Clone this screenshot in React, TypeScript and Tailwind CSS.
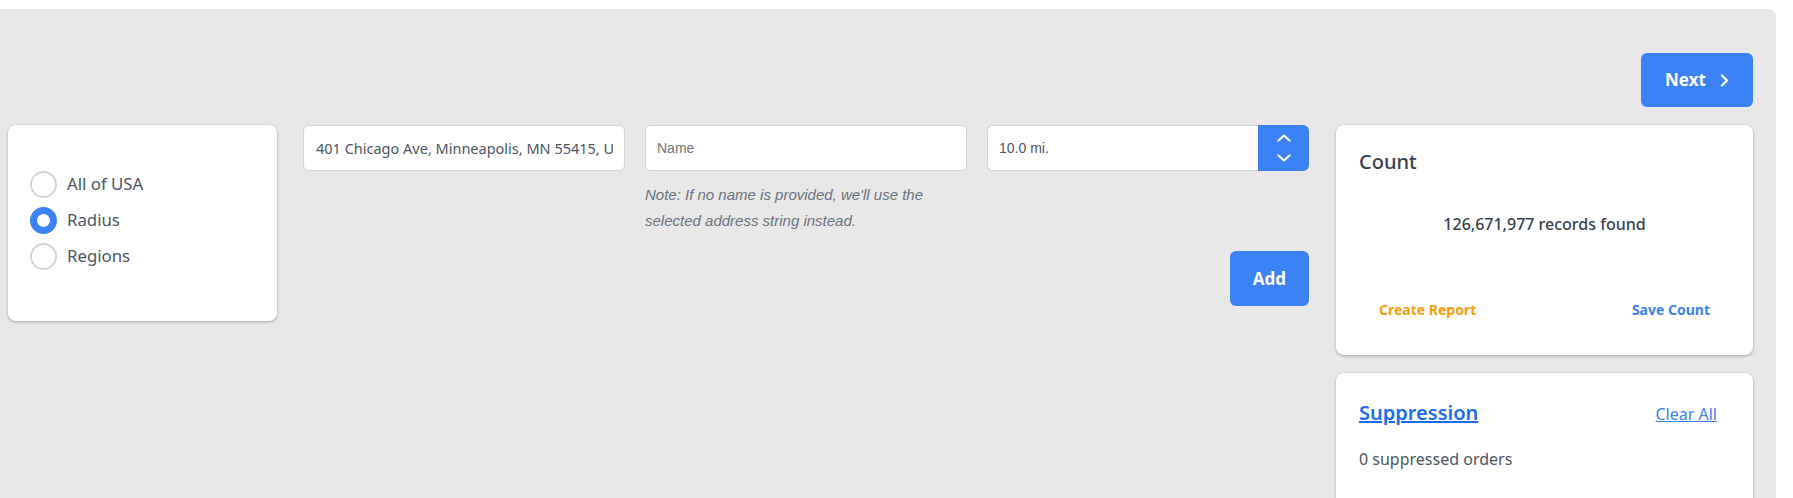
import React from "react";

const sans = "font-['Noto_Sans',sans-serif]";
const arial = "font-['Liberation_Sans',Arial,sans-serif]";

function Radio({ label, checked }: { label: string; checked?: boolean }) {
  return (
    <div className="flex h-[36px] items-center gap-[10px]">
      <span
        className={
          checked
            ? "box-border h-[27px] w-[27px] rounded-full border-[7px] border-[#3b82f6] bg-white"
            : "box-border h-[27px] w-[27px] rounded-full border-2 border-[#d1d5db] bg-white"
        }
      />
      <span className={`${sans} text-[16.8px] text-[#4b5563]`}>{label}</span>
    </div>
  );
}

export default function App() {
  return (
    <div className="h-[498px] w-full overflow-hidden bg-white">
      <div className="mt-[9px] box-border h-[489px] w-[1776px] rounded-tr-lg bg-[#e8e8e8] pl-[8px] pr-[23px] pt-[44px]">
        <div className="flex justify-end">
          <button className={`${sans} flex h-[54px] w-[112px] items-center gap-[14px] rounded-md bg-[#3b82f6] pl-[24px] text-[17px] font-bold text-white`}>
            <span>Next</span>
            <svg width="9" height="13" viewBox="0 0 9 13" fill="none">
              <polyline points="2,1.5 7,6.5 2,11.5" stroke="white" strokeWidth="2.2" strokeLinecap="round" strokeLinejoin="round" />
            </svg>
          </button>
        </div>

        <div className="mt-[18px] flex items-start">
          {/* Left card */}
          <div className="box-border h-[196px] w-[269px] shrink-0 rounded-lg bg-white pl-[22px] pt-[41px] shadow-[0_1px_3px_rgba(0,0,0,0.3)]">
            <Radio label="All of USA" />
            <Radio label="Radius" checked />
            <Radio label="Regions" />
          </div>

          {/* Middle */}
          <div className="ml-[26px] flex w-[1006px] shrink-0 flex-col">
            <div className="flex items-start gap-[20px]">
              <div className="flex-1">
                <input
                  readOnly
                  value="401 Chicago Ave, Minneapolis, MN 55415, USA"
                  className={`${sans} box-border h-[46px] w-full rounded-md border border-[#d1d5db] bg-white pl-[12px] pr-[11px] text-[14.5px] text-[#4b5563] outline-none`}
                />
              </div>
              <div className="flex-1">
                <input
                  readOnly
                  placeholder="Name"
                  className={`${arial} box-border h-[46px] w-full rounded-md border border-[#d1d5db] bg-white pl-[11px] text-[14px] text-[#4b5563] outline-none placeholder:text-[#757575]`}
                />
                <p className={`${arial} mt-[11px] text-[15px] italic leading-[26px] text-[#6b7280]`}>
                  Note: If no name is provided, we'll use the selected address string instead.
                </p>
              </div>
              <div className="flex h-[46px] flex-1">
                <input
                  readOnly
                  value="10.0 mi."
                  className={`${arial} box-border h-[46px] min-w-0 flex-1 rounded-l-md border border-r-0 border-[#d1d5db] bg-white pl-[11px] text-[14px] text-[#4b5563] outline-none`}
                />
                <div className="flex w-[51px] shrink-0 flex-col items-center justify-center gap-[12px] rounded-r-md bg-[#3b82f6]">
                  <svg width="14" height="8" viewBox="0 0 14 8" fill="none">
                    <polyline points="1.5,6.5 7,1.5 12.5,6.5" stroke="white" strokeWidth="2.2" strokeLinecap="round" strokeLinejoin="round" />
                  </svg>
                  <svg width="14" height="8" viewBox="0 0 14 8" fill="none">
                    <polyline points="1.5,1.5 7,6.5 12.5,1.5" stroke="white" strokeWidth="2.2" strokeLinecap="round" strokeLinejoin="round" />
                  </svg>
                </div>
              </div>
            </div>
            <div className="mt-[17px] flex justify-end">
              <button className={`${sans} h-[55px] w-[79px] rounded-md bg-[#3b82f6] text-[17px] font-bold text-white`}>
                Add
              </button>
            </div>
          </div>

          {/* Right column */}
          <div className="ml-[27px] flex w-[417px] shrink-0 flex-col gap-[18px]">
            <div className="box-border h-[230px] rounded-lg bg-white px-[23px] pt-[23px] shadow-[0_1px_3px_rgba(0,0,0,0.3)]">
              <div className={`${sans} text-[20px] font-medium leading-[28px] text-[#374151]`}>Count</div>
              <div className={`${sans} mt-[36px] text-center text-[16px] font-medium leading-[24px] text-[#374151]`}>
                126,671,977 records found
              </div>
              <div className="mt-[64px] flex justify-between px-[20px]">
                <span className={`${sans} text-[14px] font-bold leading-[20px] text-[#f59e0b]`}>Create Report</span>
                <span className={`${sans} text-[14px] font-bold leading-[20px] text-[#3b82f6]`}>Save Count</span>
              </div>
            </div>

            <div className="box-border h-[200px] rounded-lg bg-white pl-[23px] pr-[36px] pt-[26px] shadow-[0_1px_3px_rgba(0,0,0,0.3)]">
              <div className="flex items-baseline justify-between">
                <span className={`${sans} text-[20px] font-semibold leading-[28px] text-[#1a6cf5] underline`}>Suppression</span>
                <span className={`${sans} text-[16px] leading-[24px] text-[#3b82f6] underline`}>Clear All</span>
              </div>
              <div className={`${sans} mt-[20px] text-[16px] leading-[24px] text-[#4b5563]`}>0 suppressed orders</div>
              <div className={`${sans} mt-[22px] text-[16px] leading-[24px] text-[#4b5563]`}>0 suppressed files</div>
            </div>
          </div>
        </div>
      </div>
    </div>
  );
}
